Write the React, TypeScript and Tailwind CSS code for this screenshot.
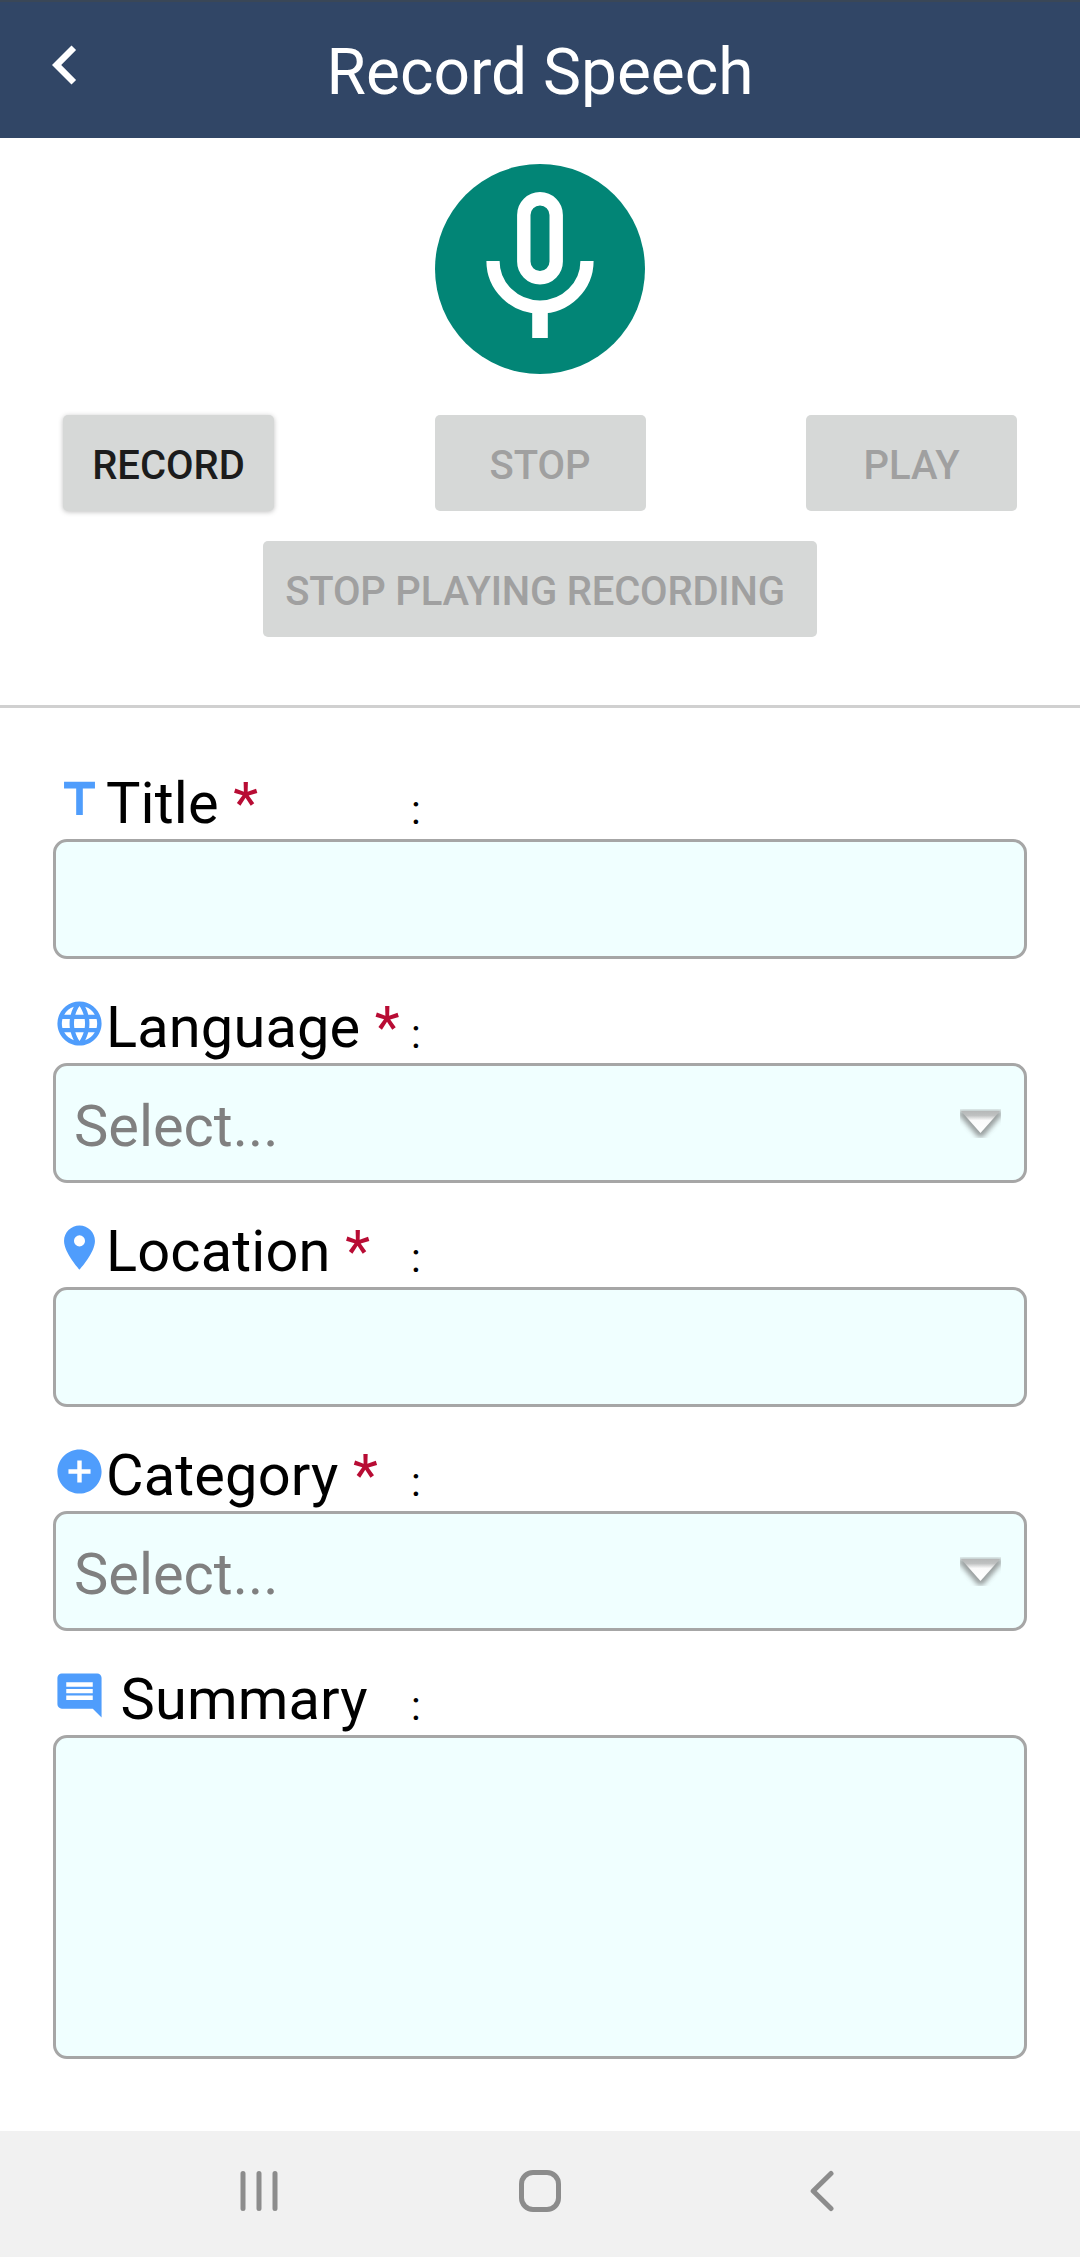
import type { ReactNode } from "react";

const icons = {
  title: "M5 4v3h5.5v12h3V7H19V4z",
  language:
    "M11.99 2C6.47 2 2 6.48 2 12s4.47 10 9.99 10C17.52 22 22 17.52 22 12S17.52 2 11.99 2zm6.93 6h-2.95a15.65 15.65 0 0 0-1.38-3.56A8.03 8.03 0 0 1 18.92 8zM12 4.04c.83 1.2 1.48 2.53 1.91 3.96h-3.82c.43-1.43 1.08-2.76 1.91-3.96zM4.26 14C4.1 13.36 4 12.69 4 12s.1-1.36.26-2h3.38c-.08.66-.14 1.32-.14 2s.06 1.34.14 2H4.26zm.82 2h2.95c.32 1.25.78 2.45 1.38 3.56A7.987 7.987 0 0 1 5.08 16zm2.95-8H5.08a7.987 7.987 0 0 1 4.33-3.56A15.65 15.65 0 0 0 8.03 8zM12 19.96c-.83-1.2-1.48-2.53-1.91-3.96h3.82c-.43 1.43-1.08 2.76-1.91 3.96zM14.34 14H9.66c-.09-.66-.16-1.32-.16-2s.07-1.35.16-2h4.68c.09.65.16 1.32.16 2s-.07 1.34-.16 2zm.25 5.56c.6-1.11 1.06-2.31 1.38-3.56h2.95a8.03 8.03 0 0 1-4.33 3.56zM16.36 14c.08-.66.14-1.32.14-2s-.06-1.34-.14-2h3.38c.16.64.26 1.31.26 2s-.1 1.36-.26 2h-3.38z",
  location:
    "M12 2C8.13 2 5 5.13 5 9c0 5.25 7 13 7 13s7-7.75 7-13c0-3.87-3.13-7-7-7zm0 9.5a2.5 2.5 0 0 1 0-5 2.5 2.5 0 0 1 0 5z",
  category:
    "M12 2C6.48 2 2 6.48 2 12s4.48 10 10 10 10-4.48 10-10S17.52 2 12 2zm5 11h-4v4h-2v-4H7v-2h4V7h2v4h4v2z",
  summary:
    "M21.99 4c0-1.1-.89-2-1.99-2H4c-1.1 0-2 .9-2 2v12c0 1.1.9 2 2 2h14l4 4-.01-18zM18 14H6v-2h12v2zm0-3H6V9h12v2zm0-3H6V6h12v2z",
};

function GreyButton({ children, className, enabled }: { children: ReactNode; className: string; enabled?: boolean }) {
  return (
    <button
      disabled={!enabled}
      className={`h-24 rounded-[5px] bg-[#d6d8d7] pt-[5px] text-[40px] leading-[91px] font-medium whitespace-nowrap ${
        enabled ? "text-[#1c1c1c] shadow-[0_1px_5px_rgba(0,0,0,0.25)]" : "text-[#a0a0a0]"
      } ${className}`}
    >
      {children}
    </button>
  );
}

function Field({
  icon,
  label,
  required,
  indent,
  children,
}: {
  icon: keyof typeof icons;
  label: string;
  required?: boolean;
  indent?: boolean;
  children: ReactNode;
}) {
  return (
    <div>
      <div className="flex h-[104px] items-start pt-[38px]">
        <svg viewBox="0 0 24 24" className="size-[53px] shrink-0 fill-[#4f9dfc]">
          <path d={icons[icon]} />
        </svg>
        <div className="w-[305px] text-[57.75px] leading-[61px] tracking-[0.15px] whitespace-pre text-black">
          {indent ? " " : ""}
          {label}
          {required && <span className="text-[#b80c34]"> *</span>}
        </div>
        <span className="text-[40.4px] leading-[75px] text-black">:</span>
      </div>
      {children}
    </div>
  );
}

const box = "w-full rounded-[14px] border-[3px] border-[#a6a6a6] bg-[#f0ffff]";

function SelectBox() {
  return (
    <div className={`${box} flex h-[120px] items-center justify-between pr-[23px] pl-[18px]`}>
      <span className="pt-[6px] text-[57.75px] leading-[108px] text-[#808080]">Select...</span>
      <svg viewBox="0 0 41 29" className="mt-px h-[29px] w-[41px]">
        <defs>
          <linearGradient id="arrow" x1="0" y1="0" x2="0" y2="1">
            <stop offset="0" stopColor="#b6b8b8" />
            <stop offset="0.2" stopColor="#bfc1c1" />
            <stop offset="0.42" stopColor="#fafafa" />
            <stop offset="1" stopColor="#ffffff" />
          </linearGradient>
          <filter id="soft" x="-30%" y="-30%" width="160%" height="160%">
            <feGaussianBlur stdDeviation="2.4" />
          </filter>
        </defs>
        <path d="M-2 2H43V5L23 28H18L-2 5z" fill="#8a8e8e" filter="url(#soft)" opacity="0.85" />
        <path d="M1 2H40L20.5 24z" fill="url(#arrow)" />
      </svg>
    </div>
  );
}

export default function App() {
  return (
    <div className="flex h-[2257px] w-[1080px] flex-col overflow-hidden bg-white font-[Roboto,sans-serif]">
      <header className="grid h-[138px] shrink-0 grid-cols-[104px_1fr_104px] border-t-2 border-[#3a4757] bg-[#314666]">
        <svg viewBox="0 0 24 24" className="mt-6 ml-[26px] size-[78px] fill-white">
          <path d="M15.41 7.41L14 6l-6 6 6 6 1.41-1.41L10.83 12z" />
        </svg>
        <h1 className="pt-[4px] text-center text-[64px] leading-[134px] text-white">Record Speech</h1>
      </header>

      <section className="flex h-[570px] shrink-0 flex-col items-center border-b-[3px] border-[#d0d0d0] pt-[26px]">
        <svg viewBox="0 0 210 210" className="size-[210px] shrink-0" fill="none" stroke="#fff">
          <circle cx="105" cy="105" r="105" fill="#028576" stroke="none" />
          <rect x="88.8" y="34.7" width="32.4" height="79" rx="16.2" strokeWidth="13.4" />
          <path d="M58 97a47 46 0 0 0 94 0" strokeWidth="13.2" />
          <path d="M105 144v30" strokeWidth="15.6" />
        </svg>
        <div className="mt-[41px] flex w-full justify-between pr-[63px] pl-[63px]">
          <GreyButton enabled className="w-[211px]">RECORD</GreyButton>
          <GreyButton className="w-[211px]">STOP</GreyButton>
          <GreyButton className="w-[211px]">PLAY</GreyButton>
        </div>
        <GreyButton className="mt-[30px] w-[554px] pr-[10px] tracking-[-0.2px]">STOP PLAYING RECORDING</GreyButton>
      </section>

      <main className="flex-1 px-[53px] pt-[27px]">
        <Field icon="title" label="Title" required>
          <div className={`${box} h-[120px]`} />
        </Field>
        <Field icon="language" label="Language" required>
          <SelectBox />
        </Field>
        <Field icon="location" label="Location" required>
          <div className={`${box} h-[120px]`} />
        </Field>
        <Field icon="category" label="Category" required>
          <SelectBox />
        </Field>
        <Field icon="summary" label="Summary" indent>
          <div className={`${box} h-[324px]`} />
        </Field>
      </main>

      <nav className="flex h-[126px] shrink-0 items-center bg-[#f1f1f1] pb-[6px] pl-[240px]">
        <svg viewBox="0 0 38 42" className="h-[42px] w-[38px]" stroke="#8c8c8c" strokeWidth="5" strokeLinecap="round">
          <path d="M3 3.5v35M19 3.5v35M35 3.5v35" />
        </svg>
        <svg viewBox="0 0 42 42" className="ml-[241px] size-[42px]" fill="none" stroke="#8c8c8c" strokeWidth="5">
          <rect x="2.5" y="2.5" width="37" height="37" rx="11.5" />
        </svg>
        <svg viewBox="0 0 24 42" className="ml-[249px] h-[42px] w-[24px]" fill="none" stroke="#8c8c8c" strokeWidth="5" strokeLinecap="round" strokeLinejoin="round">
          <path d="M21 3.5L3.2 21 21 38.5" />
        </svg>
      </nav>
    </div>
  );
}
